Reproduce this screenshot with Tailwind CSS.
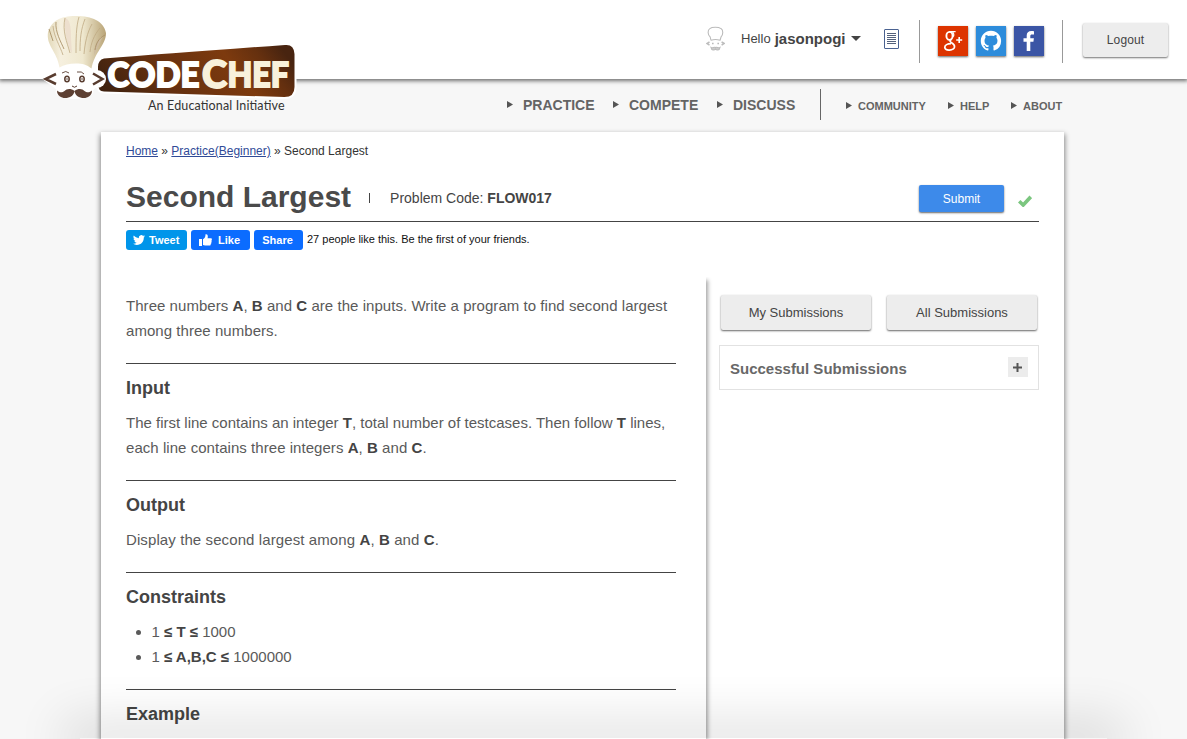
<!DOCTYPE html>
<html lang="en">
<head>
<meta charset="utf-8">
<title>Second Largest | CodeChef</title>
<script src="https://cdn.jsdelivr.net/npm/@tailwindcss/browser@4"></script>
</head>
<body class="relative h-[739px] w-[1187px] overflow-hidden bg-[#f7f7f7] font-['Liberation_Sans',Arial,sans-serif] text-[#444]">

<header class="relative flex h-[79px] items-start bg-white pl-[706px] shadow-[0_1px_4px_1px_rgba(0,0,0,0.55)]">
  <svg class="mt-[26px] h-[26px] w-[19px]" viewBox="0 0 19 26" fill="none" stroke="#bbb" stroke-width="1.1">
    <path d="M5 14.500 4.200 11C1.500 9 1.500 4 3.800 2.600 6 .8 12.500.8 15 2.600 17.400 4 17.300 9 15 11l-1 3.500M5 14.200q4.500-1.500 9 0" />
    <path d="M3.500 16 .9 17.500l2.600 1.700M15.600 16l2.600 1.500-2.600 1.700M6 17.500h1.600m3.800 0H13" stroke-width="1.500"/>
    <path d="M5 21.500c1.500 1 3-.8 4.500 0 1.500-.8 3 1 4.500 0-.5 3.200-3.500 3-4.500 1.500-1 1.500-4 1.700-4.500-1.500Z" fill="#ccc"/>
  </svg>
  <div class="mt-[28px] ml-[16px] flex items-center leading-5 whitespace-nowrap">
    <span class="pt-px text-[13px]">Hello</span><span class="ml-[4px] text-[15px] font-bold">jasonpogi</span>
    <svg class="ml-[6px] h-[5px] w-[10px]" viewBox="0 0 10 5"><path d="M0 0h10L5 5z" fill="#444"/></svg>
  </div>
  <svg class="absolute left-[884px] top-[29px] h-[20px] w-[15px]" viewBox="0 0 15 20" fill="none" stroke="#4a6291">
    <rect x=".5" y=".5" width="14" height="19" rx=".5"/><path d="M3 4.500h9M3 6.500h9M3 8.500h9M3 10.500h9M3 12.500h9M3 14.500h9" stroke="#53617c"/>
  </svg>
  <div class="absolute left-[919px] top-[20px] flex h-[43px] w-[144px] items-start gap-2 border-x border-[#999] pl-[18px] pt-[6px]">
    <svg class="h-[30px] w-[30px] shadow-[0_1px_2px_rgba(0,0,0,0.6)]" viewBox="0 0 30 30"><path fill="#dd3400" d="M0 0h30v30H0z"/>
      <g fill="none" stroke="#fff"><ellipse cx="11.500" cy="9.900" rx="3.100" ry="4" stroke-width="1.900"/><path d="M11 5.700h6.600M14.500 6.200c1.300 1 1.500 3 .8 4.500" stroke-width="1.200"/><path d="M13.500 13.300c-2 1.200-2 2.200.1 3.500 2 1.200 3.300 2.300 2.900 4.300-.8 3.600-9.300 4.200-9.700.4-.2-2.600 2.800-3.800 6.200-3.800" stroke-width="1.700"/><path d="M18.200 14h6M21.200 11v6" stroke-width="1.600"/></g></svg>
    <svg class="h-[30px] w-[30px] shadow-[0_1px_2px_rgba(0,0,0,0.6)]" viewBox="0 0 30 30"><path fill="#2d8cdb" d="M0 0h30v30H0z"/>
      <path transform="translate(4.800 4.800) scale(1.270)" fill="#fff" d="M8 0C3.580 0 0 3.580 0 8c0 3.540 2.290 6.530 5.470 7.590.4.070.55-.17.55-.38 0-.19-.01-.82-.01-1.490-2.010.37-2.530-.49-2.690-.94-.09-.23-.48-.94-.82-1.130-.28-.15-.68-.52-.01-.53.63-.01 1.080.58 1.230.82.72 1.210 1.870.87 2.330.66.070-.52.280-.87.510-1.070-1.780-.2-3.640-.89-3.640-3.950 0-.87.310-1.590.82-2.150-.08-.2-.36-1.020.080-2.120 0 0 .67-.21 2.200.82.64-.18 1.320-.27 2-.27s1.360.09 2 .27c1.530-1.040 2.200-.82 2.200-.82.44 1.100.16 1.920.08 2.120.51.56.82 1.270.82 2.150 0 3.070-1.870 3.750-3.650 3.950.29.25.54.73.54 1.480 0 1.070-.01 1.930-.01 2.200 0 .21.150.46.55.38A8.010 8.010 0 0 0 16 8c0-4.420-3.580-8-8-8Z"/></svg>
    <svg class="h-[30px] w-[30px] shadow-[0_1px_2px_rgba(0,0,0,0.6)]" viewBox="0 0 30 30"><path fill="#3b55a5" d="M0 0h30v30H0z"/><path fill="#fff" d="M12.700 25v-9.300H9.500v-3.400h3.200V9.600c0-3 1.800-4.500 4.600-4.500 1.300 0 2.300.1 2.700.2v3.200h-1.900c-1.400 0-1.800.7-1.800 1.700v2.100h3.600l-.5 3.400h-3.100V25Z"/></svg>
  </div>
  <button class="absolute left-[1083px] top-[23px] h-[34px] w-[85px] rounded-[2px] bg-[#ededed] text-[12px] tracking-[0.1px] shadow-[0_1px_2px_rgba(0,0,0,0.55)]">Logout</button>

  <svg class="absolute left-[40px] top-[10px] h-[110px] w-[262px]" viewBox="40 10 262 110">
    <defs>
      <linearGradient id="board" x1="0" x2="1" y1=".6" y2=".4"><stop offset="0" stop-color="#40220f"/><stop offset=".3" stop-color="#643010"/><stop offset=".7" stop-color="#7d3a0e"/><stop offset=".87" stop-color="#65300f"/><stop offset="1" stop-color="#482410"/></linearGradient>
      <linearGradient id="hat" x1="0" x2="1"><stop offset="0" stop-color="#e2d8b8"/><stop offset=".22" stop-color="#f6f0df"/><stop offset=".6" stop-color="#efe8cf"/><stop offset="1" stop-color="#b9a477"/></linearGradient>
    </defs>
    <path d="M104 58.500Q175 53 285 45q9-1 9.500 9v33q0 10-10 10L104 91.500q-6 0-6-8V67q0-7 6-8.500Z" fill="url(#board)" stroke="#fff" stroke-width="4" paint-order="stroke"/>
    <path d="M58 64C56 50 46 46 48 31 53 18 65 15 77 15c14 1 28 6 29 19 0 10-12 14-13 32Z" fill="#fff" stroke="#fff" stroke-width="3"/>
    <ellipse cx="75" cy="80" rx="23" ry="17" fill="#fff"/><ellipse cx="74.500" cy="92" rx="19" ry="7" fill="#fff"/>
    <path d="m57 69-16 9 15 11ZM91 69l15 10-13 11Z" fill="#fff"/><circle cx="97" cy="79" r="9" fill="#fff"/>
    <path d="M59.500 67.500C57 51 46 46 48 32 53 18 64 16 77 16c14 0 27 5 29 17 .5 11-12 20-14.500 35.500-5-4-9-5-15.500-5-7 0-12 1.500-16.500 4Z" fill="url(#hat)"/>
    <path d="M65 18c5 1 6 9 6 19l1 17c-4-8-8-20-7-36Z" fill="#eddfce"/><path d="m103 36-9 19c0-9 3-16 9-19Z" fill="#cdbba0"/>
    <path d="M79 17c-3 10-3 22-3 36m9-34c-4 10-5 20-5 32m12-27c-5 9-7 19-8 30m16-26c-6 7-9 15-10 24M53 26c1 11 7 20 10 29M65 18c-3 13 2 24 5 35" fill="none" stroke="#bfa983" stroke-width=".8"/>
    <path d="m49 29 4 12M56 22c-1 10 5 20 8 27M105 35c-6 3-9 8-10 15" fill="none" stroke="#aa9268" stroke-width=".9"/>
    <path d="m56 74-10.500 5L56 84M93 73.500 102.500 79 93 84.500" fill="none" stroke="#583c2f" stroke-width="2.500"/>
    <path d="M62 73q4-3 7 0m8-1q5-1 7 2" fill="none" stroke="#583c2f" stroke-width=".9"/>
    <ellipse cx="67" cy="79" rx="2.200" ry="2.800" fill="#fff" stroke="#583c2f" stroke-width="1.500"/><ellipse cx="82" cy="79" rx="2.200" ry="2.800" fill="#fff" stroke="#583c2f" stroke-width="1.500"/><circle cx="67" cy="79" r=".8" fill="#583c2f"/><circle cx="82" cy="79" r=".8" fill="#583c2f"/>
    <path d="M72 86q2.500 2.500 5 0" stroke="#583c2f" fill="none"/>
    <path d="M74.500 91c-4-3-8-2-10 0-2 1.500-5 2-7.500-.5 0 5.500 4.500 7.500 8 7.500 5 0 9-2.500 9.500-7 .5 4.500 4.500 7 9.500 7 3.500 0 8-2 8-7.500-2.500 2.500-5.500 2-7.500.5-2-2-6-3-10 0Z" fill="#5d4033"/>
    <g font-family="Lato,sans-serif" font-weight="900" font-size="35" stroke-width="1.800">
      <text x="107.500" y="87" textLength="92" lengthAdjust="spacingAndGlyphs" fill="#fff" stroke="#fff">CODE</text>
      <text x="202" y="88" textLength="25" lengthAdjust="spacingAndGlyphs" fill="#f8f1db" stroke="#f8f1db" font-size="38">C</text>
      <text x="227.500" y="87" textLength="61.500" lengthAdjust="spacingAndGlyphs" fill="#f8f1db" stroke="#f8f1db" font-size="34">HEF</text>
    </g>
    <text x="148" y="110" font-family="Lato,sans-serif" font-size="12.500" textLength="136.500" fill="#333">An Educational Initiative</text>
  </svg>
</header>

<nav class="flex h-[53px] items-start pl-[507px] pt-[10px] font-bold whitespace-nowrap text-[#646464]">
  <div class="flex h-[31px] w-[314px] items-center border-r border-[#666] text-[14px]">
    <a class="flex w-[106px] items-center gap-[10px]"><svg class="h-[7px] w-[6px]" viewBox="0 0 6 7"><path d="M0 0 6 3.500 0 7z" fill="#555"/></svg><span class="pt-[2px]">PRACTICE</span></a>
    <a class="flex w-[104px] items-center gap-[10px]"><svg class="h-[7px] w-[6px]" viewBox="0 0 6 7"><path d="M0 0 6 3.500 0 7z" fill="#555"/></svg><span class="pt-[2px]">COMPETE</span></a>
    <a class="flex items-center gap-[10px]"><svg class="h-[7px] w-[6px]" viewBox="0 0 6 7"><path d="M0 0 6 3.500 0 7z" fill="#555"/></svg><span class="pt-[2px]">DISCUSS</span></a>
  </div>
  <div class="flex h-[33px] items-center pl-[25px] text-[11px]">
    <a class="flex w-[102px] items-center gap-[6px]"><svg class="h-[7px] w-[6px]" viewBox="0 0 6 7"><path d="M0 0 6 3.500 0 7z" fill="#555"/></svg><span class="pt-[2px]">COMMUNITY</span></a>
    <a class="flex w-[63px] items-center gap-[6px]"><svg class="h-[7px] w-[6px]" viewBox="0 0 6 7"><path d="M0 0 6 3.500 0 7z" fill="#555"/></svg><span class="pt-[2px]">HELP</span></a>
    <a class="flex items-center gap-[6px]"><svg class="h-[7px] w-[6px]" viewBox="0 0 6 7"><path d="M0 0 6 3.500 0 7z" fill="#555"/></svg><span class="pt-[2px]">ABOUT</span></a>
  </div>
</nav>

<main class="ml-[101px] h-[607px] w-[963px] bg-white pt-[9px] shadow-[0_3px_5px_1px_rgba(0,0,0,0.45)]">
  <div class="mx-[25px] h-[20px] text-[12px] leading-5 whitespace-nowrap text-[#333]"><a class="text-[#2f4a97] underline">Home</a> » <a class="text-[#2f4a97] underline">Practice(Beginner)</a> » Second Largest</div>
  <div class="mx-[25px] flex h-[61px] items-start border-b border-[#444] pt-[18px] whitespace-nowrap">
    <h1 class="text-[30px] leading-[36px] font-bold text-[#4a4a4a]">Second Largest</h1>
    <span class="mt-[14px] ml-[18px] h-[10px] w-px bg-[#444]"></span>
    <p class="ml-[20px] pt-[9px] text-[14px] leading-5">Problem Code: <b>FLOW017</b></p>
    <button class="mt-[6px] ml-auto h-[27px] w-[85px] rounded-[2px] bg-[#3d8aea] text-[12px] text-white shadow-[0_1px_2px_rgba(0,0,0,0.6)]">Submit</button>
    <svg class="mt-[16px] mr-[7px] ml-[14px] h-[12px] w-[14px]" viewBox="0 0 14 12"><path d="m1.200 6.200 4 3.800L12.800 1.800" fill="none" stroke="#7bc67f" stroke-width="3.600"/></svg>
  </div>
  <div class="mx-[25px] mt-[8px] flex h-[20px] items-center gap-1 text-[11px] font-bold whitespace-nowrap text-white">
    <a class="flex h-5 w-[61px] items-center gap-[4px] rounded-[3px] bg-[#0095ea] pl-[7px]"><svg class="h-[12px] w-[12px]" viewBox="0 2 24 20"><path fill="#fff" d="M23.950 4.570a10 10 0 0 1-2.820.770 4.960 4.960 0 0 0 2.160-2.720c-.95.550-2 .950-3.130 1.180a4.920 4.920 0 0 0-8.380 4.480C7.690 8.090 4.070 6.130 1.640 3.160a4.920 4.920 0 0 0 1.520 6.570 4.900 4.900 0 0 1-2.230-.610v.060c0 2.380 1.700 4.370 3.950 4.830a5 5 0 0 1-2.210.080 4.940 4.940 0 0 0 4.600 3.420A9.870 9.870 0 0 1 0 19.540a14 14 0 0 0 7.550 2.210c9.050 0 14-7.500 14-13.980l-.02-.63a9.900 9.900 0 0 0 2.420-2.570Z"/></svg><span>Tweet</span></a>
    <a class="flex h-5 w-[59px] items-center gap-[6px] rounded-[3px] bg-[#0b6cff] pl-[8px]"><svg class="h-[12px] w-[13px]" viewBox="0 0 13 12"><path fill="#fff" d="M0 5h3v7H0zM4 5.200C6 4.300 6.500 2.500 6.500.300 8.500-.3 9.300 1.600 8.500 4.300h3.200c1.400 0 1.600 1.500.7 1.900.7.500.5 1.600-.2 1.900.5.700.2 1.500-.5 1.800.2.900-.2 1.700-1.200 1.700H6L4 11Z"/></svg><span>Like</span></a>
    <a class="flex h-5 w-[49px] items-center justify-center rounded-[3px] bg-[#0b6cff] pr-[2px]">Share</a>
    <span class="pb-[2px] text-[11px] font-normal text-[#111]">27 people like this. Be the first of your friends.</span>
  </div>

  <div class="mt-[27px] flex">
    <article class="h-[462px] w-[605px] bg-white pt-[16px] pr-[30px] pl-[25px] text-[15px] leading-[25px] shadow-[3px_2px_4px_-1px_rgba(0,0,0,0.35)] [clip-path:inset(0_-8px_0_0)]">
      <section class="pb-[20px] text-[#5a5a5a] [&_b]:text-[#444]"><p class="tracking-[0.045px]">Three numbers <b>A</b>, <b>B</b> and <b>C</b> are the inputs. Write a program to find second largest<br>among three numbers.</p></section>
      <section class="border-t border-[#444] pt-[12px] pb-[20px]"><h3 class="mb-[9px] text-[18px] font-bold">Input</h3>
        <p class="text-[#5a5a5a] [&_b]:text-[#444]">The first line contains an integer <b>T</b>, total number of testcases. Then follow <b>T</b> lines,<br><span class="tracking-[0.045px]">each line contains three integers <b>A</b>, <b>B</b> and <b>C</b>.</span></p></section>
      <section class="border-t border-[#444] pt-[12px] pb-[20px]"><h3 class="mb-[9px] text-[18px] font-bold">Output</h3>
        <p class="tracking-[0.1px] text-[#5a5a5a] [&_b]:text-[#444]">Display the second largest among <b>A</b>, <b>B</b> and <b>C</b>.</p></section>
      <section class="border-t border-[#444] pt-[12px] pb-[20px]"><h3 class="mb-[9px] text-[18px] font-bold">Constraints</h3>
        <ul class="list-disc pl-[25.500px] text-[#5a5a5a] [&_b]:text-[#444]"><li>1 <b>≤ T ≤</b> 1000</li><li>1 <b>≤ A,B,C ≤</b> 1000000</li></ul></section>
      <section class="border-t border-[#444] pt-[12px]"><h3 class="text-[18px] font-bold">Example</h3></section>
    </article>
    <aside class="pt-[18px] pl-[13px]">
      <div class="flex gap-4 pl-[2px] text-[13px]">
        <button class="h-[35px] w-[150px] rounded-[2px] bg-[#ededed] shadow-[0_1px_2px_rgba(0,0,0,0.6)]">My Submissions</button>
        <button class="h-[35px] w-[150px] rounded-[2px] bg-[#ededed] shadow-[0_1px_2px_rgba(0,0,0,0.6)]">All Submissions</button>
      </div>
      <div class="mt-[15px] flex h-[45px] w-[320px] items-start justify-between border border-[#e2e2e2] pt-[11px] pr-[10px] pl-[10px]">
        <h4 class="pt-[2px] text-[15px] leading-5 font-bold text-[#686868]">Successful Submissions</h4>
        <span class="flex h-5 w-5 items-center justify-center bg-[#ececec] pr-px"><svg class="h-[9px] w-[9px]" viewBox="0 0 9 9"><path d="M0 4.500h9M4.500 0v9" stroke="#555" stroke-width="2"/></svg></span>
      </div>
    </aside>
  </div>
</main>

<div class="pointer-events-none absolute inset-x-0 bottom-0 flex h-[80px] items-end justify-center overflow-hidden"><div class="h-px w-[1027px] shadow-[0_0_50px_16px_rgba(0,0,0,0.14)]"></div></div>
</body>
</html>
